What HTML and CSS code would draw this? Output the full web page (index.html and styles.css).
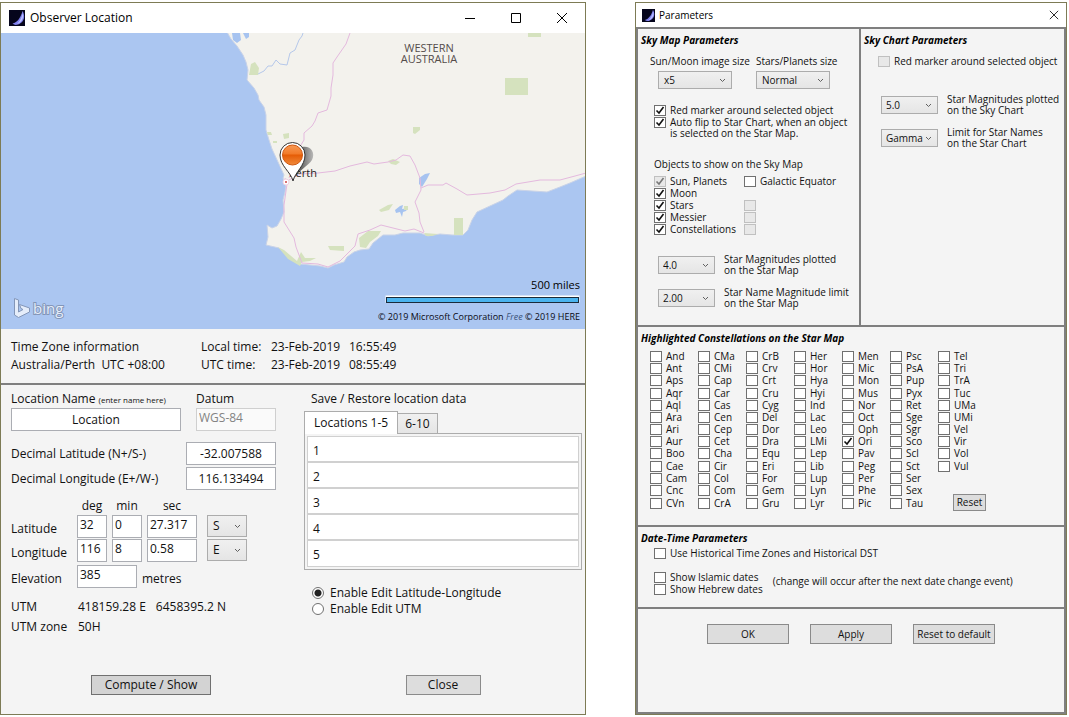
FILE: index.html
```html
<!DOCTYPE html>
<html lang="en">
<head>
    <meta charset="UTF-8">
    <meta name="viewport" content="width=device-width, initial-scale=1.0">
    <title>Observer Location</title>
    <link rel="stylesheet" href="styles.css">
</head>
<body>

    <section class="window location-window">
        <header class="title-bar">
            <svg class="app-icon" viewBox="0 0 16 16" aria-hidden="true">
                <rect width="16" height="16" fill="#05051c"/>
                <path d="M13.500 1 C16.500 6 15.500 12 9 14.500 C7 15.200 5 15 3.500 13.500 C8.500 12.500 12 7 13.500 1Z" fill="#8080ee"/>
                <path d="M13.800 3 C15 8 13 12 8 14 C11 11 12.500 8 13.800 3Z" fill="#b9c0ff"/>
            </svg>
            <h1>Observer Location</h1>
            <div class="window-buttons">
                <button type="button" aria-label="Minimize"><svg viewBox="0 0 12 12"><path d="M1 6.500H11"/></svg></button>
                <button type="button" aria-label="Maximize"><svg viewBox="0 0 12 12"><path d="M1.500 1.500H10.500V10.500H1.500Z"/></svg></button>
                <button type="button" aria-label="Close window"><svg viewBox="0 0 12 12"><path d="M1 1L11 11M11 1L1 11"/></svg></button>
            </div>
        </header>

        <svg class="map" viewBox="1 33 584 296" role="img" aria-label="Map of Western Australia">
            <defs>
                <linearGradient id="pinFill" x1="0" y1="0" x2="0" y2="1">
                    <stop offset="0" stop-color="#f79a55"/>
                    <stop offset="0.45" stop-color="#f27a28"/>
                    <stop offset="0.5" stop-color="#e55c05"/>
                    <stop offset="1" stop-color="#f08a3c"/>
                </linearGradient>
                <linearGradient id="pinShadow" x1="0" y1="0" x2="1" y2="0">
                    <stop offset="0.4" stop-color="#444"/>
                    <stop offset="1" stop-color="#aaa"/>
                </linearGradient>
            </defs>
            <rect x="1" y="33" width="584" height="296" fill="#abc6f1"/>
            <!-- land -->
            <path fill="#f3f2ed" stroke="#c9d3e8" stroke-width="1" d="M227 32 L231 39 L237 46 L243 55 L246 62 L248 70 L247 80 L254 88 L258 95 L259 100 L264 107 L266 115 L266 130 L269 140 L272 149 L278 162 L284 175 L283 178 L286 186 L285 192 L283 200 L284 212 L281 219 L277 226 L272 228 L267 225 L268 237 L266 245 L279 248 L287 256 L294 260 L300 264 L320 266 L328 268 L334 265 L344 262 L347 257 L354 252 L360 250 L369 249 L373 243 L378 239 L383 235 L395 235 L403 233 L420 233 L428 236 L440 234 L452 235 L463 235 L468 230 L472 220 L477 212 L490 206 L503 200 L508 196 L517 190 L547 192 L560 187 L570 183 L586 176 L586 32Z"/>
            <!-- lakes and inlets -->
            <g fill="#a6c3f0">
                <path d="M232 33 L240 33 L241 40 L237 43 L233 40Z"/>
                <path d="M243 33 L249 33 L249 37 L246 39Z"/>
                <path d="M419 178 L425 174 L430 173 L427 179 L422 187 L419 184Z"/>
                <path d="M395 210 L400 206 L403 205 L402 209 L408 208 L406 211 L403 212 L402 217 L400 212 L396 213Z"/>
            </g>
            <path class="river" d="M258 74 L264 71 L268 66 L272 66 L276 60 L280 64 L287 65 L290 53 L295 50 L299 40 L302 36 L303 33"/>
            <!-- parks -->
            <g fill="#d5e2be">
                <path d="M505 78H528V95H505Z"/>
                <path d="M528 33H541V37H528Z"/>
                <path d="M249 75 L251 64 L255 62 L259 68 L258 75Z"/>
                <path d="M413 127 L420 127 L420 130 L415 134 L413 133Z"/>
                <path d="M388 161 L393 159 L400 162 L396 165 L391 164Z"/>
                <path d="M267 132 L271 132 L272 135 L268 135Z"/>
                <path d="M283 134 L289 133 L289 138 L284 139Z"/>
                <path d="M273 141 L277 141 L277 143 L273 143Z"/>
                <path d="M379 210 L388 205 L393 204 L389 210 L381 212Z"/>
                <path d="M404 206 L408 206 L408 210 L404 210Z"/>
                <path d="M328 246 L344 246 L344 251 L330 250Z"/>
                <path d="M359 238 L368 231 L381 231 L378 236 L370 242 L366 248 L360 247Z"/>
                <path d="M454 218H463V235H454Z"/>
                <path d="M424 233 L438 234 L432 236 L426 236Z"/>
                <path d="M278 247 L284 250 L297 261 L301 252 L305 258 L316 258 L310 261 L302 262 L300 266 L288 259Z"/>
            </g>
            <!-- highways -->
            <g class="road">
                <path d="M350 33 L346 44 L337 57 L333 63 L333 75 L331 88 L331 96 L327 110 L318 113 L315 121 L312 126 L304 133 L304 140 L299 148 L294 164 L289 178"/>
                <path d="M289 180 L300 174 L318 173 L335 171 L350 166 L367 162 L374 164 L388 162 L396 160 L403 155 L410 156 L415 165 L420 178 L421 190 L415 202 L419 213 L420 222 L424 232"/>
                <path d="M421 188 L428 185 L443 185 L446 183 L457 189 L467 195 L490 193 L505 190 L516 184 L540 180 L560 180 L575 176 L586 173"/>
                <path d="M285 178 L287 184 L284 205 L284 222 L294 238 L296 247 L302 263 L318 264 L328 267 L340 261 L345 256 L355 246 L358 234 L370 230 L381 225 L405 231 L414 229 L424 233"/>
            </g>
            <circle cx="286" cy="182" r="3" fill="#fff" stroke="#efd2e2"/>
            <circle cx="286" cy="182" r="1" fill="#c44"/>
            <text class="map-state" x="429" y="52">WESTERN</text>
            <text class="map-state" x="429" y="63">AUSTRALIA</text>
            <!-- marker -->
            <path fill="url(#pinShadow)" opacity="0.8" d="M293 180 L299 168 L302 147 C310 145 316 152 312 160 C308 166 299 170 293 180Z"/>
            <text class="map-city" x="289" y="177">Perth</text>
            <path fill="#fff" stroke="#333" stroke-width="1" d="M293 181 C291 172 280 166 280 155 A12.500 12.500 0 0 1 305 155 C305 166 295 172 293 181Z"/>
            <circle cx="292.500" cy="155" r="10" fill="url(#pinFill)" stroke="#cf5710" stroke-width="1"/>
            <!-- bing logo -->
            <path fill="#e5edfa" stroke="#8396b8" stroke-width="1" d="M14.500 298.500 L18.500 300 V312 L23 309.500 L21 308.500 L19.500 304.500 L29.500 308 V312 L18.500 317.500 L14.500 315Z"/>
            <text class="bing" x="33" y="314">bing</text>
            <!-- scale -->
            <text class="map-scale" x="580" y="289">500 miles</text>
            <rect x="385.500" y="295.500" width="194" height="7" fill="#fff"/>
            <rect x="386.500" y="297.500" width="192" height="5" fill="#4ab3ee" stroke="#1a2a3a" stroke-width="1"/>
            <text class="map-credit map-plan" x="506" y="320">Free</text>
            <text class="map-credit" x="378" y="320">© 2019 Microsoft Corporation</text>
            <text class="map-credit" x="525" y="320">© 2019 HERE</text>
        </svg>

        <dl class="time-zone">
            <dt>Time Zone information</dt>
            <dd>Local time:</dd>
            <dd>23-Feb-2019</dd>
            <dd>16:55:49</dd>
            <dt>Australia/Perth&nbsp; UTC +08:00</dt>
            <dd>UTC time:</dd>
            <dd>23-Feb-2019</dd>
            <dd>08:55:49</dd>
        </dl>

        <form class="location-form">
            <div class="coordinates">
                <div class="name-row">
                    <label for="locationName">Location Name <small>(enter name here)</small></label>
                    <label for="datum">Datum</label>
                    <input type="text" id="locationName" class="centered" value="Location">
                    <input type="text" id="datum" class="top-text" value="WGS-84" disabled>
                </div>
                <div class="decimal-rows">
                    <label for="decimalLat">Decimal Latitude (N+/S-)</label>
                    <input type="text" id="decimalLat" class="centered" value="-32.007588">
                    <label for="decimalLong">Decimal Longitude (E+/W-)</label>
                    <input type="text" id="decimalLong" class="centered" value="116.133494">
                </div>
                <div class="dms-heads">
                    <span></span>
                    <span>deg</span>
                    <span>min</span>
                    <span>sec</span>
                </div>
                <div class="dms-rows">
                    <label for="latDeg">Latitude</label>
                    <input type="text" id="latDeg" class="top-text" value="32">
                    <input type="text" class="top-text" aria-label="Latitude minutes" value="0">
                    <input type="text" class="top-text" aria-label="Latitude seconds" value="27.317">
                    <select aria-label="Latitude hemisphere"><option>S</option><option>N</option></select>
                    <label for="longDeg">Longitude</label>
                    <input type="text" id="longDeg" class="top-text" value="116">
                    <input type="text" class="top-text" aria-label="Longitude minutes" value="8">
                    <input type="text" class="top-text" aria-label="Longitude seconds" value="0.58">
                    <select aria-label="Longitude hemisphere"><option>E</option><option>W</option></select>
                </div>
                <div class="elevation-row">
                    <label for="elevation">Elevation</label>
                    <input type="text" id="elevation" class="top-text" value="385">
                    <span>metres</span>
                </div>
                <dl class="utm">
                    <dt>UTM</dt>
                    <dd><span>418159.28 E</span><span>6458395.2 N</span></dd>
                    <dt>UTM zone</dt>
                    <dd>50H</dd>
                </dl>
            </div>

            <div class="saved">
                <p class="saved-title">Save / Restore location data</p>
                <div class="tabs">
                    <button type="button" class="tab active">Locations 1-5</button>
                    <button type="button" class="tab">6-10</button>
                </div>
                <div class="tab-panel">
                    <ul>
                        <li>1</li>
                        <li>2</li>
                        <li>3</li>
                        <li>4</li>
                        <li>5</li>
                    </ul>
                </div>
                <div class="edit-mode">
                    <label><input type="radio" name="editMode" checked>Enable Edit Latitude-Longitude</label>
                    <label><input type="radio" name="editMode">Enable Edit UTM</label>
                </div>
            </div>
        </form>

        <footer class="location-actions">
            <button type="button" class="btn compute">Compute / Show</button>
            <button type="button" class="btn close">Close</button>
        </footer>
    </section>

    <section class="window parameters-window">
        <header class="title-bar">
            <svg class="app-icon" viewBox="0 0 16 16" aria-hidden="true">
                <rect width="16" height="16" fill="#05051c"/>
                <path d="M13.500 1 C16.500 6 15.500 12 9 14.500 C7 15.200 5 15 3.500 13.500 C8.500 12.500 12 7 13.500 1Z" fill="#8080ee"/>
                <path d="M13.800 3 C15 8 13 12 8 14 C11 11 12.500 8 13.800 3Z" fill="#b9c0ff"/>
            </svg>
            <h1>Parameters</h1>
            <div class="window-buttons">
                <button type="button" aria-label="Close parameters"><svg viewBox="0 0 12 12"><path d="M1 1L11 11M11 1L1 11"/></svg></button>
            </div>
        </header>

        <form class="groups">
            <div class="group sky-map">
                <h2>Sky Map Parameters</h2>
                <div class="sizes">
                    <label for="sunMoonSize">Sun/Moon image size</label>
                    <label for="starsSize">Stars/Planets size</label>
                    <select id="sunMoonSize" class="indent"><option>x5</option></select>
                    <select id="starsSize"><option>Normal</option></select>
                </div>
                <div class="checks map-options">
                    <label><input type="checkbox" checked>Red marker around selected object</label>
                    <label><input type="checkbox" checked><span>Auto flip to Star Chart, when an object<br>is selected on the Star Map.</span></label>
                </div>
                <p class="objects-title">Objects to show on the Sky Map</p>
                <div class="objects">
                    <label><input type="checkbox" checked disabled>Sun, Planets</label>
                    <label><input type="checkbox">Galactic Equator</label>
                    <label><input type="checkbox" checked>Moon</label>
                    <span></span>
                    <label><input type="checkbox" checked>Stars</label>
                    <input type="checkbox" aria-label="Stars option" disabled>
                    <label><input type="checkbox" checked>Messier</label>
                    <input type="checkbox" aria-label="Messier option" disabled>
                    <label><input type="checkbox" checked>Constellations</label>
                    <input type="checkbox" aria-label="Constellations option" disabled>
                </div>
                <div class="limits">
                    <select id="mapMagnitude"><option>4.0</option></select>
                    <label for="mapMagnitude">Star Magnitudes plotted<br>on the Star Map</label>
                    <select id="mapNames"><option>2.00</option></select>
                    <label for="mapNames">Star Name Magnitude limit<br>on the Star Map</label>
                </div>
            </div>

            <div class="group sky-chart">
                <h2>Sky Chart Parameters</h2>
                <div class="checks chart-options">
                    <label><input type="checkbox" disabled>Red marker around selected object</label>
                </div>
                <div class="limits">
                    <select id="chartMagnitude"><option>5.0</option></select>
                    <label for="chartMagnitude">Star Magnitudes plotted<br>on the Sky Chart</label>
                    <select id="chartNames"><option>Gamma</option></select>
                    <label for="chartNames">Limit for Star Names<br>on the Star Chart</label>
                </div>
            </div>

            <div class="group wide constellation-group">
                <h2>Highlighted Constellations on the Star Map</h2>
                <div class="constellations">
                    <label><input type="checkbox">And</label>
                    <label><input type="checkbox">Ant</label>
                    <label><input type="checkbox">Aps</label>
                    <label><input type="checkbox">Aqr</label>
                    <label><input type="checkbox">Aql</label>
                    <label><input type="checkbox">Ara</label>
                    <label><input type="checkbox">Ari</label>
                    <label><input type="checkbox">Aur</label>
                    <label><input type="checkbox">Boo</label>
                    <label><input type="checkbox">Cae</label>
                    <label><input type="checkbox">Cam</label>
                    <label><input type="checkbox">Cnc</label>
                    <label><input type="checkbox">CVn</label>
                    <label><input type="checkbox">CMa</label>
                    <label><input type="checkbox">CMi</label>
                    <label><input type="checkbox">Cap</label>
                    <label><input type="checkbox">Car</label>
                    <label><input type="checkbox">Cas</label>
                    <label><input type="checkbox">Cen</label>
                    <label><input type="checkbox">Cep</label>
                    <label><input type="checkbox">Cet</label>
                    <label><input type="checkbox">Cha</label>
                    <label><input type="checkbox">Cir</label>
                    <label><input type="checkbox">Col</label>
                    <label><input type="checkbox">Com</label>
                    <label><input type="checkbox">CrA</label>
                    <label><input type="checkbox">CrB</label>
                    <label><input type="checkbox">Crv</label>
                    <label><input type="checkbox">Crt</label>
                    <label><input type="checkbox">Cru</label>
                    <label><input type="checkbox">Cyg</label>
                    <label><input type="checkbox">Del</label>
                    <label><input type="checkbox">Dor</label>
                    <label><input type="checkbox">Dra</label>
                    <label><input type="checkbox">Equ</label>
                    <label><input type="checkbox">Eri</label>
                    <label><input type="checkbox">For</label>
                    <label><input type="checkbox">Gem</label>
                    <label><input type="checkbox">Gru</label>
                    <label><input type="checkbox">Her</label>
                    <label><input type="checkbox">Hor</label>
                    <label><input type="checkbox">Hya</label>
                    <label><input type="checkbox">Hyi</label>
                    <label><input type="checkbox">Ind</label>
                    <label><input type="checkbox">Lac</label>
                    <label><input type="checkbox">Leo</label>
                    <label><input type="checkbox">LMi</label>
                    <label><input type="checkbox">Lep</label>
                    <label><input type="checkbox">Lib</label>
                    <label><input type="checkbox">Lup</label>
                    <label><input type="checkbox">Lyn</label>
                    <label><input type="checkbox">Lyr</label>
                    <label><input type="checkbox">Men</label>
                    <label><input type="checkbox">Mic</label>
                    <label><input type="checkbox">Mon</label>
                    <label><input type="checkbox">Mus</label>
                    <label><input type="checkbox">Nor</label>
                    <label><input type="checkbox">Oct</label>
                    <label><input type="checkbox">Oph</label>
                    <label><input type="checkbox" checked>Ori</label>
                    <label><input type="checkbox">Pav</label>
                    <label><input type="checkbox">Peg</label>
                    <label><input type="checkbox">Per</label>
                    <label><input type="checkbox">Phe</label>
                    <label><input type="checkbox">Pic</label>
                    <label><input type="checkbox">Psc</label>
                    <label><input type="checkbox">PsA</label>
                    <label><input type="checkbox">Pup</label>
                    <label><input type="checkbox">Pyx</label>
                    <label><input type="checkbox">Ret</label>
                    <label><input type="checkbox">Sge</label>
                    <label><input type="checkbox">Sgr</label>
                    <label><input type="checkbox">Sco</label>
                    <label><input type="checkbox">Scl</label>
                    <label><input type="checkbox">Sct</label>
                    <label><input type="checkbox">Ser</label>
                    <label><input type="checkbox">Sex</label>
                    <label><input type="checkbox">Tau</label>
                    <label><input type="checkbox">Tel</label>
                    <label><input type="checkbox">Tri</label>
                    <label><input type="checkbox">TrA</label>
                    <label><input type="checkbox">Tuc</label>
                    <label><input type="checkbox">UMa</label>
                    <label><input type="checkbox">UMi</label>
                    <label><input type="checkbox">Vel</label>
                    <label><input type="checkbox">Vir</label>
                    <label><input type="checkbox">Vol</label>
                    <label><input type="checkbox">Vul</label>
                    <button type="button" class="btn reset">Reset</button>
                </div>
            </div>

            <div class="group wide date-group">
                <h2>Date-Time Parameters</h2>
                <div class="checks">
                    <label><input type="checkbox">Use Historical Time Zones and Historical DST</label>
                </div>
                <div class="calendar-row">
                    <div class="checks">
                        <label><input type="checkbox">Show Islamic dates</label>
                        <label><input type="checkbox">Show Hebrew dates</label>
                    </div>
                    <p>(change will occur after the next date change event)</p>
                </div>
            </div>

            <div class="group wide parameter-actions">
                <button type="button" class="btn">OK</button>
                <button type="button" class="btn">Apply</button>
                <button type="button" class="btn">Reset to default</button>
            </div>
        </form>
    </section>

</body>
</html>
```
FILE: styles.css
```css
* {
    box-sizing: border-box;
}

body {
    font-family: "Open Sans", "Noto Sans", sans-serif;
    font-size: 12px;
    line-height: 16px;
    color: #111;
    background-color: #ffffff;
    margin: 0;
    padding: 2px 2px 2px 0;
    min-height: 100vh;
    display: grid;
    grid-template-columns: 586fr 432fr;
    gap: 49px;
}

h1, h2, p, dl, dd, ul {
    margin: 0;
    padding: 0;
    font-size: inherit;
    font-weight: normal;
}

input, select, button {
    font-family: inherit;
    font-size: inherit;
    line-height: inherit;
    color: inherit;
    margin: 0;
}

/* Window frames */
.window {
    display: flex;
    flex-direction: column;
    background-color: #f4f4f4;
    border: 1px solid #7d7b55;
}

.title-bar {
    display: flex;
    align-items: center;
    height: 30px;
    padding-left: 8px;
    background-color: #ffffff;
    color: #000;
}

.app-icon {
    width: 16px;
    height: 16px;
    margin-right: 5px;
}

.window-buttons {
    display: flex;
    margin-left: auto;
}

.window-buttons button {
    display: flex;
    justify-content: center;
    align-items: center;
    width: 46px;
    height: 28px;
    padding: 0;
    border: none;
    background: none;
}

.window-buttons svg {
    width: 12px;
    height: 12px;
    fill: none;
    stroke: #000;
    stroke-width: 1;
}

/* Map */
.map {
    display: block;
    width: 100%;
}

.map .road {
    fill: none;
    stroke: #e4b9de;
    stroke-width: 1;
}

.map .river {
    fill: none;
    stroke: #b5c8ea;
    stroke-width: 1;
}

.map-state {
    font-size: 11px;
    text-anchor: middle;
    fill: #544c4a;
}

.map-city {
    font-size: 11px;
    fill: #222;
}

.bing {
    font-size: 15px;
    fill: #e5edfa;
    stroke: #8396b8;
    stroke-width: 2;
    paint-order: stroke;
}

.map-scale {
    font-size: 11px;
    text-anchor: end;
}

.map-credit {
    font-size: 9px;
    fill: #0a0a14;
}

.map-plan {
    font-style: italic;
    fill: #3d557c;
}

/* Time zone strip */
.time-zone {
    display: grid;
    grid-template-columns: 190px 70px 78px 1fr;
    row-gap: 2px;
    padding: 10px;
    border-bottom: 2px solid #7f7f7f;
}

/* Location form */
.location-form {
    display: grid;
    grid-template-columns: 265px 1fr;
    gap: 28px;
    padding: 6px 3px 0 10px;
}

.location-form input[type="text"] {
    width: 100%;
    height: 23px;
    padding: 0 2px;
    border: 1px solid #abadb3;
    border-radius: 0;
    background-color: #ffffff;
}

.location-form .centered {
    text-align: center;
}

.location-form input.top-text {
    padding-bottom: 4px;
}

.location-form input:disabled {
    color: #838383;
    background-color: #fafafa;
    border-color: #cfcfcf;
}

.location-form select {
    width: 40px;
    height: 22px;
    justify-self: end;
}

.name-row {
    display: grid;
    grid-template-columns: 170px 80px;
    column-gap: 15px;
}

.name-row small {
    font-size: 8px;
}

.decimal-rows {
    display: grid;
    grid-template-columns: 175px 90px;
    row-gap: 2px;
    align-items: center;
    margin-top: 11px;
}

.dms-heads,
.dms-rows {
    display: grid;
    grid-template-columns: 61px 30px 30px 50px 45px;
    column-gap: 5px;
}

.dms-heads {
    margin-top: 8px;
}

.dms-heads span {
    text-align: center;
}

.dms-rows {
    row-gap: 1px;
    margin-top: 1px;
}

.dms-rows label,
.elevation-row label,
.elevation-row span {
    align-self: end;
    padding-bottom: 1px;
}

.elevation-row {
    display: grid;
    grid-template-columns: 61px 60px 1fr;
    column-gap: 5px;
    margin-top: 3px;
}

.utm {
    display: grid;
    grid-template-columns: 67px 1fr;
    row-gap: 4px;
    margin-top: 11px;
}

.utm dd {
    display: flex;
    gap: 10px;
}

/* Saved locations */
.saved-title {
    padding-left: 7px;
}

.tabs {
    display: flex;
    align-items: flex-end;
    margin-top: 4px;
}

.tab {
    height: 20px;
    padding: 0 7px;
    border: 1px solid #acacac;
    border-width: 1px 1px 0 0;
    background: linear-gradient(#f0f0f0, #e5e5e5);
}

.tab.active {
    height: 23px;
    padding: 0 9px;
    border-left-width: 1px;
    margin-bottom: -1px;
    background: #ffffff;
    position: relative;
}

.tab-panel {
    padding: 2px;
    border: 1px solid #acacac;
}

.tab-panel ul {
    list-style: none;
    border: 1px solid #d0d0d0;
}

.tab-panel li {
    height: 26px;
    padding: 6px 5px 0;
    background-color: #ffffff;
    border-bottom: 2px solid #d0d0d0;
}

.tab-panel li:last-child {
    height: 25px;
    border-bottom: none;
}

.edit-mode {
    display: flex;
    flex-direction: column;
    margin-top: 15px;
    padding-left: 8px;
}

.edit-mode label {
    display: flex;
    align-items: center;
    gap: 6px;
}

.edit-mode input {
    appearance: none;
    width: 12px;
    height: 12px;
    border: 1px solid #707070;
    border-radius: 50%;
    background-color: #ffffff;
}

.edit-mode input:checked {
    background-image: radial-gradient(#212121 3px, transparent 4px);
}

/* Buttons and drop-downs */
.btn {
    height: 20px;
    padding: 0;
    border: 1px solid #8a8a8a;
    background-color: #dddddd;
}

select {
    appearance: none;
    padding: 0 5px;
    border: 1px solid #acacac;
    border-radius: 0;
    background: url("data:image/svg+xml,%3Csvg xmlns='http://www.w3.org/2000/svg' width='7' height='5'%3E%3Cpath d='M1 1L3.5 3.5L6 1' fill='none' stroke='%23606060'/%3E%3C/svg%3E") no-repeat right 5px center, linear-gradient(#f0f0f0, #e5e5e5);
}

.location-actions {
    display: grid;
    grid-template-columns: 300px 1fr;
    justify-items: center;
    margin-top: auto;
    padding-bottom: 19px;
}

.compute {
    width: 120px;
    background-color: #d3d3d3;
    border-color: #707070;
}

.close {
    width: 75px;
}

/* Parameters window */
.parameters-window {
    font-size: 10px;
    line-height: 11px;
}

.parameters-window .title-bar {
    height: 24px;
    padding-left: 6px;
}

.parameters-window .app-icon {
    width: 13px;
    height: 13px;
    margin-right: 4px;
}

.parameters-window .window-buttons button {
    width: 24px;
    height: 22px;
}

.parameters-window .window-buttons svg {
    width: 10px;
    height: 10px;
}

.groups {
    flex: 1;
    display: grid;
    grid-template-columns: 222fr 204fr;
    grid-template-rows: auto auto auto 1fr;
    gap: 2px;
    padding: 2px;
    background-color: #7f7f7f;
}

.group {
    padding: 6px 3px;
    background-color: #f4f4f4;
}

.wide {
    grid-column: 1 / -1;
}

.group h2 {
    font-weight: bold;
    font-style: italic;
    color: #000;
}

.groups label:has(input) {
    display: flex;
    align-items: flex-start;
    gap: 4px;
}

.groups input[type="checkbox"] {
    appearance: none;
    flex: none;
    width: 12px;
    height: 11px;
    border: 1px solid #707070;
    background-color: #ffffff;
}

.groups input:checked {
    background: #ffffff url("data:image/svg+xml,%3Csvg xmlns='http://www.w3.org/2000/svg' width='10' height='9'%3E%3Cpath d='M1.5 4.500L4 7L8.500 1' fill='none' stroke='%23111' stroke-width='1.600'/%3E%3C/svg%3E") no-repeat center;
}

.groups input[type="checkbox"]:disabled {
    border-color: #c0c0c0;
    background-color: #e8e8e8;
}

.groups input:checked:disabled {
    background-image: url("data:image/svg+xml,%3Csvg xmlns='http://www.w3.org/2000/svg' width='10' height='9'%3E%3Cpath d='M1.5 4.500L4 7L8.500 1' fill='none' stroke='%23777' stroke-width='1.600'/%3E%3C/svg%3E");
}

.groups select {
    height: 18px;
}

.sky-map {
    padding-bottom: 16px;
}

.sizes {
    display: grid;
    grid-template-columns: 106px 74px;
    row-gap: 4px;
    margin-top: 10px;
    padding-left: 9px;
}

.sizes label {
    white-space: nowrap;
}

.sizes .indent {
    width: 74px;
    margin-left: 8px;
}

.checks {
    display: flex;
    flex-direction: column;
    gap: 1px;
    padding-left: 13px;
}

.map-options {
    margin-top: 16px;
}

.objects-title {
    margin-top: 20px;
    padding-left: 13px;
}

.objects {
    display: grid;
    grid-template-columns: 90px 1fr;
    row-gap: 1px;
    margin-top: 6px;
    padding-left: 13px;
}

.limits {
    display: grid;
    grid-template-columns: 57px 1fr;
    gap: 11px 9px;
    align-items: center;
    margin-top: 19px;
    padding-left: 17px;
}

.limits select {
    padding-left: 4px;
}

.chart-options {
    margin-top: 10px;
    padding-left: 14px;
}

.sky-chart .limits {
    margin-top: 27px;
}

.constellations {
    display: grid;
    grid-template-columns: repeat(7, 48px);
    grid-template-rows: repeat(13, 1fr);
    grid-auto-flow: column;
    height: 160px;
    margin-top: 7px;
    padding-left: 9px;
}

.constellation-group {
    padding-bottom: 14px;
}

.reset {
    grid-row: 12 / 14;
    grid-column: 7;
    align-self: start;
    width: 33px;
    height: 17px;
    margin: 9px 0 0 15px;
}

.date-group .checks {
    margin-top: 4px;
}

.date-group {
    padding-bottom: 12px;
}

.calendar-row {
    display: flex;
    align-items: center;
    gap: 10px;
    margin-top: 9px;
}

.parameter-actions {
    display: flex;
    justify-content: center;
    align-items: flex-start;
    gap: 21px;
    padding-top: 15px;
}

.parameter-actions .btn {
    width: 82px;
}
```
